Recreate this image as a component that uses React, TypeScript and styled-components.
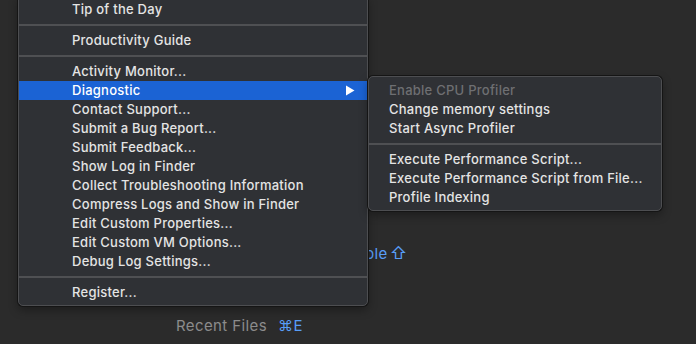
import React from "react";
import styled, { createGlobalStyle } from "styled-components";

const GlobalStyle = createGlobalStyle`
  html, body {
    margin: 0;
    padding: 0;
    background: #2b2b2b;
    overflow: hidden;
  }
  body {
    font-family: Inter, "Noto Sans", "Liberation Sans", sans-serif;
    -webkit-font-smoothing: antialiased;
  }
`;

const Screen = styled.div`
  position: relative;
  width: 696px;
  height: 344px;
  background: #2b2b2b;
  overflow: hidden;
`;

const Hints = styled.div`
  padding-top: 235px;
  display: flex;
  flex-direction: column;
  align-items: flex-start;
  gap: 36px;
  font-size: 15px;
  letter-spacing: 0.4px;
`;

const Hint = styled.div<{ $indent: number }>`
  height: 36px;
  display: flex;
  align-items: center;
  gap: 11px;
  padding-left: ${({ $indent }) => $indent}px;
  color: #8c8c8c;
  white-space: nowrap;
`;

const Key = styled.span`
  color: #589df6;
`;

const Glyph = styled.span`
  font-size: 17px;
  margin-left: 2px;
`;

const Menu = styled.div<{ $top: number; $left: number; $width: number }>`
  position: absolute;
  top: ${({ $top }) => $top}px;
  left: ${({ $left }) => $left}px;
  width: ${({ $width }) => $width}px;
  box-sizing: border-box;
  padding: 4px 0 3px;
  background: #2f3135;
  border: 1px solid #4d4e51;
  border-radius: 5px;
  box-shadow: 0 0 0 1px #151515, 0 4px 10px rgba(0, 0, 0, 0.35);
  font-size: 13px;
  font-weight: 500;
  letter-spacing: 0.25px;
  color: #e4e4e4;
`;

const Item = styled.div<{ $active?: boolean; $disabled?: boolean; $indent: number }>`
  height: 19px;
  display: flex;
  align-items: center;
  justify-content: space-between;
  padding: 0 12px 0 ${({ $indent }) => $indent}px;
  background: ${({ $active }) => ($active ? "#1b63d4" : "transparent")};
  color: ${({ $active, $disabled }) =>
    $disabled ? "#6e6f72" : $active ? "#ffffff" : "#e4e4e4"};
  white-space: nowrap;
`;

const Label = styled.span`
  margin-top: -1px;
`;

const Separator = styled.div`
  height: 2px;
  margin: 5px 0;
  background: #4f5053;
`;

const Arrow = styled.svg`
  width: 10px;
  height: 11px;
`;

type Entry = { label?: string; sep?: boolean; active?: boolean; disabled?: boolean; sub?: boolean };

const mainItems: Entry[] = [
  { label: "Tip of the Day" },
  { sep: true },
  { label: "Productivity Guide" },
  { sep: true },
  { label: "Activity Monitor..." },
  { label: "Diagnostic", active: true, sub: true },
  { label: "Contact Support..." },
  { label: "Submit a Bug Report..." },
  { label: "Submit Feedback..." },
  { label: "Show Log in Finder" },
  { label: "Collect Troubleshooting Information" },
  { label: "Compress Logs and Show in Finder" },
  { label: "Edit Custom Properties..." },
  { label: "Edit Custom VM Options..." },
  { label: "Debug Log Settings..." },
  { sep: true },
  { label: "Register..." },
];

const subItems: Entry[] = [
  { label: "Enable CPU Profiler", disabled: true },
  { label: "Change memory settings" },
  { label: "Start Async Profiler" },
  { sep: true },
  { label: "Execute Performance Script..." },
  { label: "Execute Performance Script from File..." },
  { label: "Profile Indexing" },
];

function renderItems(items: Entry[], indent: number) {
  return items.map((it, i) =>
    it.sep ? (
      <Separator key={i} />
    ) : (
      <Item key={i} $indent={indent} $active={it.active} $disabled={it.disabled}>
        <Label>{it.label}</Label>
        {it.sub && (
          <Arrow viewBox="0 0 10 11">
            <path d="M1 0.5 L9.5 5.5 L1 10.5 Z" fill="#ffffff" />
          </Arrow>
        )}
      </Item>
    )
  );
}

export default function App() {
  return (
    <>
      <GlobalStyle />
      <Screen>
        <Hints>
          <Hint $indent={179}>
            Search Everywhere
            <Key>
              Double<Glyph>⇧</Glyph>
            </Key>
          </Hint>
          <Hint $indent={176}>
            Recent Files <Key>⌘E</Key>
          </Hint>
        </Hints>
        <Menu $top={-5} $left={18} $width={350}>
          {renderItems(mainItems, 53)}
        </Menu>
        <Menu $top={76} $left={368} $width={294}>
          {renderItems(subItems, 20)}
        </Menu>
      </Screen>
    </>
  );
}
